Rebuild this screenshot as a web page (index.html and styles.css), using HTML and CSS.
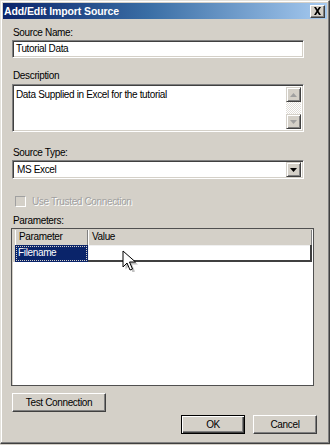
FILE: index.html
```html
<!DOCTYPE html>
<html>
<head>
<meta charset="utf-8">
<link rel="stylesheet" href="styles.css">
</head>
<body>
<div class="dialog">
  <div class="titlebar">
    <span class="title">Add/Edit Import Source</span>
    <span class="close"><svg width="9" height="8" viewBox="0 0 9 8"><path d="M1 0h2l1.5 2.5L6 0h2L5.5 4 8 8H6L4.5 5.5 3 8H1l2.5-4z" fill="#000"/></svg></span>
  </div>
  <div class="content">
    <div class="lbl l1">Source Name:</div>
    <div class="field input">Tutorial Data</div>
    <div class="lbl l2">Description</div>
    <div class="field textarea">
      <div class="ta-text">Data Supplied in Excel for the tutorial</div>
      <div class="vscroll">
        <div class="sbtn"><svg width="7" height="4" viewBox="0 0 7 4"><path d="M3.5 0L7 4H0z" fill="#a0a0a0"/></svg></div>
        <div class="strack"></div>
        <div class="sbtn"><svg width="7" height="4" viewBox="0 0 7 4"><path d="M0 0h7L3.5 4z" fill="#a0a0a0"/></svg></div>
      </div>
    </div>
    <div class="lbl l3">Source Type:</div>
    <div class="field select">
      <span class="sel-text">MS Excel</span>
      <span class="sbtn dd"><svg width="7" height="4" viewBox="0 0 7 4"><path d="M0 0h7L3.5 4z" fill="#000"/></svg></span>
    </div>
    <div class="check-row"><span class="checkbox"></span><span class="disabled">Use Trusted Connection</span></div>
    <div class="lbl l4">Parameters:</div>
    <div class="grid">
      <div class="ghead">
        <span class="rowhdr"></span>
        <span class="hcell c1">Parameter</span>
        <span class="hcell c2">Value</span>
      </div>
      <div class="grow">
        <span class="rowhdr"></span>
        <span class="cell c1 selected"><span class="focus">Filename</span></span>
        <span class="cell c2 edit"></span>
      </div>
    </div>
    <div class="test-row"><span class="btn test">Test Connection</span></div>
    <div class="btn-row"><span class="btn default">OK</span><span class="btn">Cancel</span></div>
  </div>
  <svg class="cursor" width="16" height="22" viewBox="0 0 16 22">
    <path d="M2 2v16l4-4 3 7 2.5-1-3-7h6z" fill="#000" opacity="0.25" transform="translate(1.5 1.5)"/>
    <path d="M1 1v16l4-4 3 7 2.5-1-3-7h6z" fill="#fff" stroke="#000" stroke-width="1" stroke-linejoin="round"/>
  </svg>
</div>
</body>
</html>
```

FILE: styles.css
```css
* { box-sizing: border-box; }
html, body { margin: 0; padding: 0; background: #d4d0c8; }
body {
  width: 330px;
  height: 445px;
  overflow: hidden;
  font-family: "Liberation Sans", Arial, sans-serif;
  font-size: 10px;
  letter-spacing: -0.35px;
  color: #000;
}
.dialog {
  position: relative;
  width: 330px;
  height: 444px;
  background: #d4d0c8;
  border: 1px solid;
  border-color: #e4e2dc #404040 #404040 #e4e2dc;
  box-shadow: inset -1px -1px #808080, inset 1px 1px #ffffff;
  padding: 2px 2px 0 2px;
  display: flex;
  flex-direction: column;
}
.titlebar {
  height: 16px;
  background: linear-gradient(to right, #0a246a 0%, #3a6ea5 45%, #a6caf0 100%);
  display: flex;
  align-items: center;
  justify-content: space-between;
  padding: 0 2px 0 1px;
}
.title {
  font-weight: bold;
  font-size: 10.5px;
  letter-spacing: -0.1px;
  color: #fff;
}
.close {
  width: 15px;
  height: 13px;
  background: #d4d0c8;
  border: 1px solid;
  border-color: #fff #404040 #404040 #fff;
  box-shadow: inset -1px -1px #808080;
  display: flex;
  align-items: center;
  justify-content: center;
}
.content {
  padding: 0 9px;
  display: flex;
  flex-direction: column;
  flex: 1;
}
.lbl { height: 13px; line-height: 13px; padding-left: 1px; }
.l1 { margin-top: 7px; }
.l2 { margin-top: 11px; }
.l3 { margin-top: 14px; }
.l4 { margin-top: 6px; }
.field {
  width: 292px;
  background: #fff;
  border: 1px solid;
  border-color: #808080 #ffffff #ffffff #808080;
  box-shadow: inset 1px 1px #404040, inset -1px -1px #d4d0c8;
}
.input {
  margin-top: 1px;
  height: 18px;
  line-height: 16px;
  padding-left: 3px;
}
.textarea {
  margin-top: 2px;
  height: 48px;
  display: flex;
  padding: 2px;
}
.ta-text { flex: 1; padding: 1px; line-height: 13px; }
.vscroll {
  width: 15px;
  display: flex;
  flex-direction: column;
}
.strack {
  flex: 1;
  background: repeating-conic-gradient(#ffffff 0 25%, #d4d0c8 0 50%) 0 0 / 2px 2px;
  opacity: 0.7;
}
.sbtn {
  height: 15px;
  width: 15px;
  background: #d4d0c8;
  border: 1px solid;
  border-color: #d4d0c8 #404040 #404040 #d4d0c8;
  box-shadow: inset 1px 1px #fff, inset -1px -1px #808080;
  display: flex;
  align-items: center;
  justify-content: center;
}
.select {
  margin-top: 1px;
  height: 19px;
  display: flex;
  align-items: center;
  padding: 2px;
}
.sel-text { flex: 1; padding-left: 2px; }
.check-row {
  margin-top: 16px;
  height: 13px;
  display: flex;
  align-items: center;
  gap: 6px;
  padding-left: 3px;
}
.checkbox {
  width: 11px;
  height: 11px;
  background: #d4d0c8;
  border: 1px solid;
  border-color: #a0a0a0 #fff #fff #a0a0a0;
}
.disabled { color: #a0a0a0; text-shadow: 1px 1px #fff; }
.grid {
  margin-top: 1px;
  margin-left: -1px;
  width: 303px;
  height: 158px;
  background: #fff;
  border: 1px solid #505050;
  box-shadow: inset 1px 1px #d4d0c8;
  padding: 1px 1px 0 1px;
  display: flex;
  flex-direction: column;
}
.ghead {
  height: 15px;
  display: flex;
  background: #d4d0c8;
}
.rowhdr { width: 2px; background: #d4d0c8; }
.hcell {
  line-height: 14px;
  padding-left: 4px;
  border-right: 1px solid #808080;
  box-shadow: inset 1px 0 #fff;
}
.c1 { width: 73px; }
.c2 { width: 224px; }
.grow { height: 17px; display: flex; }
.cell { height: 17px; }
.selected {
  background: #0a246a;
  color: #fff;
  padding: 1px;
}
.focus {
  display: block;
  height: 15px;
  line-height: 14px;
  padding-left: 2px;
  outline: 1px dotted #d4d0c8;
  outline-offset: -1px;
}
.edit {
  background: #fff;
  border-right: 2px solid #404040;
  border-bottom: 2px solid #404040;
  box-shadow: inset 1px 1px #f0f0f0;
}
.test-row { margin-top: 7px; display: flex; }
.btn {
  height: 19px;
  display: flex;
  align-items: center;
  justify-content: center;
  background: #d4d0c8;
  border: 1px solid;
  border-color: #fff #404040 #404040 #fff;
  box-shadow: inset -1px -1px #808080;
  width: 64px;
}
.test { width: 94px; }
.btn-row {
  margin-top: 3px;
  display: flex;
  justify-content: flex-end;
  gap: 8px;
  padding-right: 1px;
}
.default {
  border: 1px solid #000;
  box-shadow: inset 1px 1px #fff, inset -1px -1px #404040, inset -2px -2px #808080;
}
.cursor {
  position: absolute;
  left: 121px;
  top: 249px;
}
```
